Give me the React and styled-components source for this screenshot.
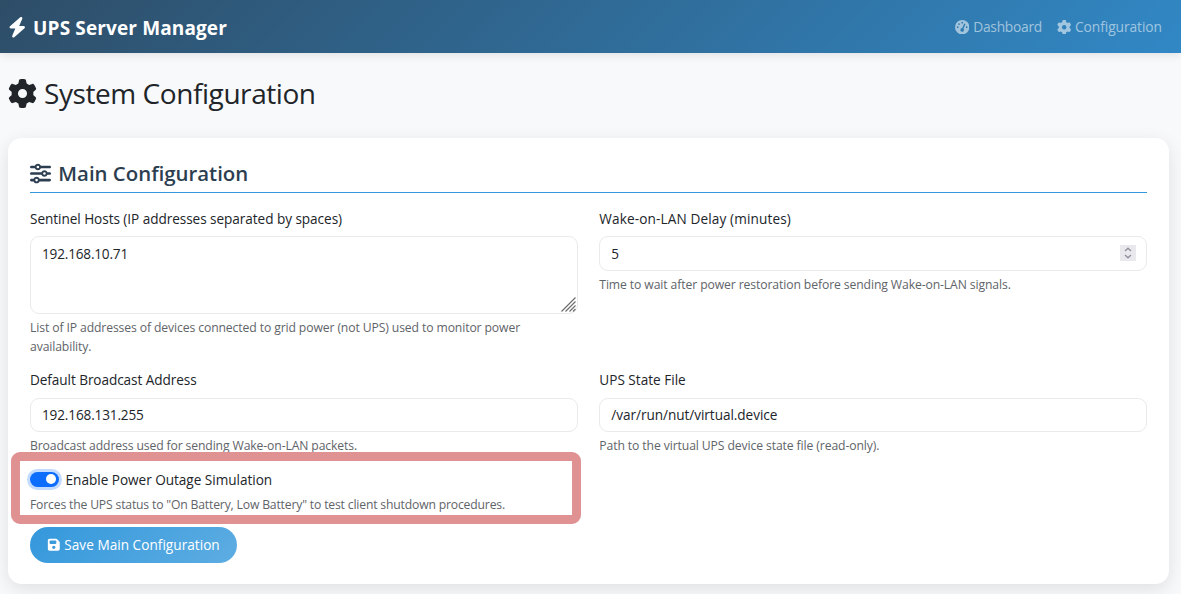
import React from 'react';
import styled, { createGlobalStyle } from 'styled-components';
import { FaBolt, FaGaugeHigh, FaGear, FaSliders, FaFloppyDisk } from 'react-icons/fa6';

const GlobalStyle = createGlobalStyle`
  *, *::before, *::after { box-sizing: border-box; }
  html { height: 100%; overflow: hidden; }
  body {
    margin: 0;
    height: 100%;
    background: #f8f9fb;
    color: #212529;
    font-family: "Open Sans", "Noto Sans", sans-serif;
    font-size: 13.6px;
    line-height: 21.6px;
  }
`;

const Text = styled.span`
  letter-spacing: ${({ $track = 0 }) => $track}px;
  white-space: nowrap;
`;

const Navbar = styled.nav`
  display: flex;
  align-items: center;
  justify-content: space-between;
  height: 53px;
  padding: 0 19px 0 7px;
  background: linear-gradient(135deg, #2e4d67 0%, #3188c5 100%);
  box-shadow: 0 2px 9px rgba(0, 0, 0, 0.1);
`;

const Brand = styled.a`
  display: flex;
  align-items: center;
  gap: 5.6px;
  padding-top: 2px;
  color: #fff;
  font-size: 19px;
  font-weight: 700;

  span {
    padding-top: 2px;
  }
`;

const NavLinks = styled.div`
  display: flex;
  align-items: center;
  gap: 14.6px;
  padding-top: 1px;
`;

const NavLink = styled.a`
  display: flex;
  align-items: center;
  gap: 4px;
  color: rgba(255, 255, 255, 0.55);
  font-size: 13.8px;
`;

const Page = styled.main`
  padding: 23px 12px 0 8px;
`;

const PageTitle = styled.h1`
  display: flex;
  align-items: center;
  gap: 7px;
  margin: 0 0 27px;
  height: 35px;
  font-size: 28px;
  font-weight: 400;
  line-height: 35px;
`;

const Card = styled.section`
  height: 446px;
  padding: 21.6px 22px;
  border-radius: 13.5px;
  background: #fff;
  box-shadow: 0 5px 18px rgba(0, 0, 0, 0.1);
`;

const CardTitle = styled.h2`
  display: flex;
  align-items: center;
  gap: 7.3px;
  height: 33px;
  margin: 0 0 15px;
  padding-bottom: 5px;
  border-bottom: 1px solid #3498db;
  color: #2c3e50;
  font-size: 20.4px;
  font-weight: 600;

  span {
    padding-top: 2px;
  }
`;

const FormGrid = styled.div`
  display: grid;
  grid-template-columns: 1fr 1fr;
  column-gap: 21.6px;
`;

const Field = styled.div`
  margin-bottom: 12.5px;
`;

const Label = styled.label`
  display: block;
  margin-bottom: 7.2px;
`;

const Control = styled.div`
  position: relative;
  display: flex;
  align-items: flex-start;
  justify-content: space-between;
  height: ${({ $height = 34 }) => $height}px;
  padding: 5.2px 10px 0 11px;
  border: 1px solid #e9eaec;
  border-radius: 9px;
  background: #fff;
`;

const ResizeGrip = styled.svg`
  position: absolute;
  right: 1px;
  bottom: 1px;
`;

const Spinner = styled.svg`
  margin-top: 2.4px;
`;

const Help = styled.div`
  margin-top: ${({ $tight }) => ($tight ? 3.5 : 4.2)}px;
  padding-bottom: ${({ $tight }) => ($tight ? 0.7 : 0)}px;
  color: #5f6469;
  font-size: 12.2px;
  line-height: 19px;
`;

const SwitchField = styled.div`
  position: relative;
  margin: 1px 0 13px;
`;

const SwitchRow = styled.label`
  display: flex;
  align-items: center;
  gap: 7px;
  height: 22.3px;
`;

const Toggle = styled.span`
  display: flex;
  align-items: center;
  justify-content: flex-end;
  width: 28.6px;
  height: 15px;
  margin-top: -0.6px;
  padding-right: 2.5px;
  border-radius: 8px;
  background: #0d6efd;
  box-shadow: 0 0 0 3px rgba(13, 110, 253, 0.25);

  &::after {
    content: '';
    width: 10px;
    height: 10px;
    border-radius: 50%;
    background: #fff;
  }
`;

const Highlight = styled.div`
  position: absolute;
  left: -19.4px;
  top: -17px;
  width: 570.7px;
  height: 72px;
  border: 9px solid #e09191;
  border-radius: 9px;
  pointer-events: none;
`;

const SaveButton = styled.button`
  display: flex;
  align-items: center;
  justify-content: center;
  gap: 4px;
  width: 207px;
  height: 36px;
  padding: 0 0.6px 0 0;
  border: 0;
  border-radius: 22px;
  background: linear-gradient(135deg, #3498db, #5dade2);
  color: #fff;
  font: inherit;
`;

export default function App() {
  return (
    <>
      <GlobalStyle />
      <Navbar>
        <Brand>
          <FaBolt size={20.5} />
          <Text $track={0.13}>UPS Server Manager</Text>
        </Brand>
        <NavLinks>
          <NavLink>
            <FaGaugeHigh size={14.4} />
            <Text $track={-0.28}>Dashboard</Text>
          </NavLink>
          <NavLink>
            <FaGear size={14.4} />
            <Text $track={-0.07}>Configuration</Text>
          </NavLink>
        </NavLinks>
      </Navbar>
      <Page>
        <PageTitle>
          <FaGear size={29} />
          <Text $track={-0.43}>System Configuration</Text>
        </PageTitle>
        <Card>
          <CardTitle>
            <FaSliders size={21} />
            <Text>Main Configuration</Text>
          </CardTitle>
          <FormGrid>
            <Field>
              <Label><Text $track={-0.055}>Sentinel Hosts (IP addresses separated by spaces)</Text></Label>
              <Control $height={78}>
                <Text $track={-0.19}>192.168.10.71</Text>
                <ResizeGrip width="15" height="15" stroke="#6e6e6e" strokeWidth="1.2">
                  <path d="M0.5 14.5 14.5 0.5M4.5 14.5 14.5 4.5M8.5 14.5 14.5 8.5M12 14.5 14.5 12" />
                </ResizeGrip>
              </Control>
              <Help $tight>
                <Text $track={-0.116}>List of IP addresses of devices connected to grid power (not UPS) used to monitor power</Text>
                <br />
                <Text $track={-0.116}>availability.</Text>
              </Help>
            </Field>
            <Field>
              <Label><Text $track={0.13}>Wake-on-LAN Delay (minutes)</Text></Label>
              <Control $height={35}>
                <Text>5</Text>
                <Spinner width="16" height="16" fill="none" stroke="#8f8f9d" strokeWidth="1.3">
                  <rect width="16" height="16" fill="#e9e9ed" stroke="none" />
                  <path d="M5 6 8 3.2 11 6M5 10 8 12.8 11 10" />
                </Spinner>
              </Control>
              <Help $tight><Text $track={-0.11}>Time to wait after power restoration before sending Wake-on-LAN signals.</Text></Help>
            </Field>
            <Field>
              <Label><Text $track={-0.075}>Default Broadcast Address</Text></Label>
              <Control>
                <Text $track={-0.15}>192.168.131.255</Text>
              </Control>
              <Help><Text $track={-0.125}>Broadcast address used for sending Wake-on-LAN packets.</Text></Help>
            </Field>
            <Field>
              <Label><Text>UPS State File</Text></Label>
              <Control>
                <Text $track={-0.05}>/var/run/nut/virtual.device</Text>
              </Control>
              <Help><Text $track={-0.11}>Path to the virtual UPS device state file (read-only).</Text></Help>
            </Field>
          </FormGrid>
          <SwitchField>
            <SwitchRow>
              <Toggle />
              <Text $track={-0.03}>Enable Power Outage Simulation</Text>
            </SwitchRow>
            <Help><Text $track={-0.177}>Forces the UPS status to "On Battery, Low Battery" to test client shutdown procedures.</Text></Help>
            <Highlight />
          </SwitchField>
          <SaveButton>
            <FaFloppyDisk size={13.6} />
            <Text $track={0.03}>Save Main Configuration</Text>
          </SaveButton>
        </Card>
      </Page>
    </>
  );
}
